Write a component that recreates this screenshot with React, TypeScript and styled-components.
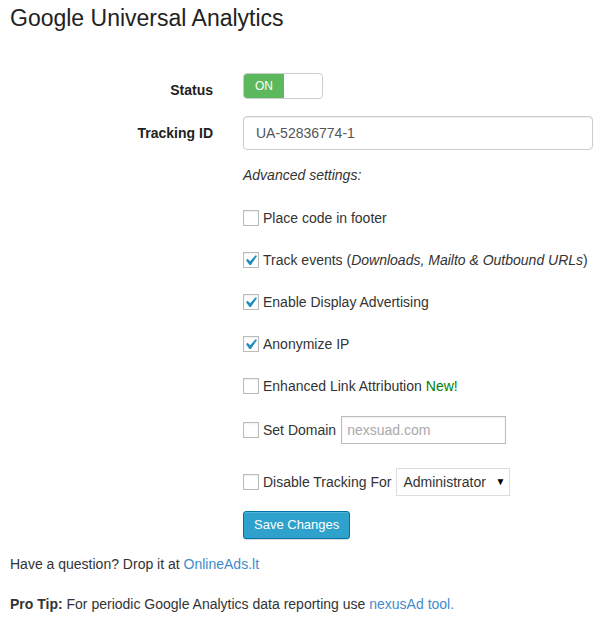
import React from "react";
import styled, { createGlobalStyle } from "styled-components";

const GlobalStyle = createGlobalStyle`
  html, body {
    margin: 0;
    padding: 0;
    background: #fff;
  }
  body {
    font-family: "Liberation Sans", Arial, sans-serif;
    font-size: 14px;
    line-height: 20px;
    color: #333;
  }
`;

const Wrap = styled.div`
  padding: 0 10px;
`;

const Title = styled.h2`
  margin: 4px 0 0;
  font-size: 23px;
  line-height: 29px;
  font-weight: 400;
  color: #222;
`;

const Form = styled.div`
  display: grid;
  grid-template-columns: 203px 1fr;
  column-gap: 30px;
  row-gap: 16px;
  margin-top: 40px;
  align-items: start;
`;

const Label = styled.div`
  text-align: right;
  font-weight: 700;
  color: #222;
  padding-top: 7px;
`;

const Toggle = styled.div`
  display: flex;
  width: 80px;
  height: 26px;
  box-sizing: border-box;
  border: 1px solid #ccc;
  border-radius: 4px;
  overflow: hidden;
  background: #fff;
`;

const ToggleOn = styled.span`
  width: 40px;
  display: flex;
  align-items: center;
  justify-content: center;
  background: #5cb85c;
  color: #fff;
  font-size: 12px;
`;

const TextInput = styled.input`
  display: block;
  width: 350px;
  height: 34px;
  box-sizing: border-box;
  padding: 6px 12px;
  border: 1px solid #ccc;
  border-radius: 4px;
  box-shadow: inset 0 1px 1px rgba(0, 0, 0, 0.075);
  font-family: inherit;
  font-size: 14px;
  color: #555;
  outline: none;
`;

const Options = styled.div`
  display: flex;
  flex-direction: column;
  align-items: flex-start;
  gap: 22px;
`;

const Note = styled.div`
  font-style: italic;
  margin-top: -1px;
  margin-bottom: 1px;
`;

const Row = styled.label<{ $tall?: boolean }>`
  display: flex;
  align-items: center;
  height: ${(p) => (p.$tall ? "28px" : "20px")};
  color: #333;
  white-space: nowrap;
`;

const DomainRow = styled(Row)`
  margin-top: -2px;
  margin-bottom: 2px;
`;

const Box = styled.span`
  position: relative;
  display: inline-block;
  width: 16px;
  height: 16px;
  box-sizing: border-box;
  border: 1px solid #bbb;
  background: #fff;
  box-shadow: inset 0 1px 2px rgba(0, 0, 0, 0.07);
  margin-right: 4px;
  flex: none;

  svg {
    position: absolute;
    left: -4px;
    top: -3px;
  }
`;

const Em = styled.em`
  font-style: italic;
`;

const NewTag = styled.span`
  color: #008000;
  margin-left: 4px;
`;

const SmallInput = styled.input`
  width: 165px;
  height: 28px;
  box-sizing: border-box;
  margin-left: 5px;
  padding: 3px 5px;
  border: 1px solid #bbb;
  box-shadow: inset 0 1px 2px rgba(0, 0, 0, 0.07);
  font-family: inherit;
  font-size: 14px;
  color: #333;
  outline: none;

  &::placeholder {
    color: #aaa;
  }
`;

const SelectWrap = styled.span`
  position: relative;
  display: inline-block;
  margin-left: 5px;
`;

const Select = styled.select`
  appearance: none;
  width: 114px;
  height: 28px;
  box-sizing: border-box;
  padding: 2px 6px;
  border: 1px solid #ddd;
  background: #fff;
  font-family: inherit;
  font-size: 14px;
  color: #333;
  outline: none;
`;

const Arrow = styled.span`
  position: absolute;
  right: 5px;
  top: 7px;
  font-size: 10px;
  line-height: 14px;
  color: #000;
  pointer-events: none;
`;

const SaveButton = styled.button`
  margin-top: -7px;
  height: 28px;
  padding: 0 10px 1px;
  border: 1px solid #0074a2;
  border-radius: 3px;
  background: #2ea2cc;
  box-shadow: inset 0 1px 0 rgba(120, 200, 230, 0.5), 0 1px 0 rgba(0, 0, 0, 0.15);
  color: #fff;
  font-family: inherit;
  font-size: 13px;
  line-height: 26px;
  cursor: pointer;
`;

const Footer = styled.p<{ $first?: boolean }>`
  margin: ${(p) => (p.$first ? "15px 0 0" : "20px 0 0")};
  color: #333;
`;

const Link = styled.a`
  color: #428bca;
  text-decoration: none;
`;

function Check({ checked }: { checked?: boolean }) {
  return (
    <Box>
      {checked && (
        <svg width="21" height="21" viewBox="0 0 20 20">
          <path
            fill="#1e8cbe"
            d="M14.83 4.89l1.34.94-5.81 8.38H9.02L5.78 9.67l1.34-1.25 2.57 2.4z"
          />
        </svg>
      )}
    </Box>
  );
}

export default function App() {
  return (
    <Wrap>
      <GlobalStyle />
      <Title>Google Universal Analytics</Title>
      <Form>
        <Label>Status</Label>
        <Toggle>
          <ToggleOn>ON</ToggleOn>
        </Toggle>

        <Label>Tracking ID</Label>
        <TextInput defaultValue="UA-52836774-1" />

        <div />
        <Options>
          <Note>Advanced settings:</Note>
          <Row>
            <Check />
            Place code in footer
          </Row>
          <Row>
            <Check checked />
            Track events (<Em>Downloads, Mailto &amp; Outbound URLs</Em>)
          </Row>
          <Row>
            <Check checked />
            Enable Display Advertising
          </Row>
          <Row>
            <Check checked />
            Anonymize IP
          </Row>
          <Row>
            <Check />
            Enhanced Link Attribution<NewTag>New!</NewTag>
          </Row>
          <DomainRow $tall>
            <Check />
            Set Domain
            <SmallInput placeholder="nexsuad.com" />
          </DomainRow>
          <Row $tall>
            <Check />
            Disable Tracking For
            <SelectWrap>
              <Select defaultValue="administrator">
                <option value="administrator">Administrator</option>
                <option value="editor">Editor</option>
              </Select>
              <Arrow>▼</Arrow>
            </SelectWrap>
          </Row>
          <SaveButton>Save Changes</SaveButton>
        </Options>
      </Form>
      <Footer $first>
        Have a question? Drop it at <Link href="#">OnlineAds.lt</Link>
      </Footer>
      <Footer>
        <b>Pro Tip:</b> For periodic Google Analytics data reporting use{" "}
        <Link href="#">nexusAd tool.</Link>
      </Footer>
    </Wrap>
  );
}
